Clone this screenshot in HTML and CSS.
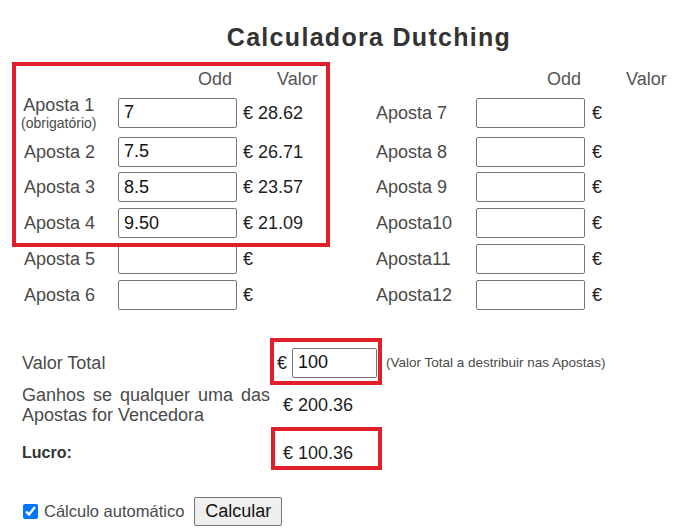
FILE: index.html
```html
<html>
	<head>
		<meta charset="utf-8">
		<title>Calculadora Dutching</title>
		<link rel="stylesheet" href="styles.css">
	</head>
	<body>

		<div id='page'>

			<h1 class='title'>Calculadora Dutching</h1>

			<!-- apostas 1 a 12, duas colunas -->
			<div class='bets'>
				<div></div>
				<div class='head odd'>Odd</div>
				<div class='head valor'>Valor</div>
				<div></div>
				<div class='head odd'>Odd</div>
				<div class='head valor'>Valor</div>

				<div class='label'><span class='first'>Aposta 1<span class='note'>(obrigatório)</span></span></div>
				<div><input class='odd-l' type='text' value='7'></div>
				<div class='value'>€ 28.62</div>
				<div class='label'>Aposta 7</div>
				<div><input class='odd-r' type='text'></div>
				<div class='value'>€</div>

				<div class='label left'>Aposta 2</div>
				<div><input class='odd-l' type='text' value='7.5'></div>
				<div class='value'>€ 26.71</div>
				<div class='label'>Aposta 8</div>
				<div><input class='odd-r' type='text'></div>
				<div class='value'>€</div>

				<div class='label left'>Aposta 3</div>
				<div><input class='odd-l' type='text' value='8.5'></div>
				<div class='value'>€ 23.57</div>
				<div class='label'>Aposta 9</div>
				<div><input class='odd-r' type='text'></div>
				<div class='value'>€</div>

				<div class='label left'>Aposta 4</div>
				<div><input class='odd-l' type='text' value='9.50'></div>
				<div class='value'>€ 21.09</div>
				<div class='label'>Aposta10</div>
				<div><input class='odd-r' type='text'></div>
				<div class='value'>€</div>

				<div class='label left'>Aposta 5</div>
				<div><input class='odd-l' type='text'></div>
				<div class='value'>€</div>
				<div class='label'>Aposta11</div>
				<div><input class='odd-r' type='text'></div>
				<div class='value'>€</div>

				<div class='label left'>Aposta 6</div>
				<div><input class='odd-l' type='text'></div>
				<div class='value'>€</div>
				<div class='label'>Aposta12</div>
				<div><input class='odd-r' type='text'></div>
				<div class='value'>€</div>
			</div>

			<div class='totals'>
				<div class='row row-total'>
					<div class='t-label'>Valor Total</div>
					<div class='t-value'>€<input class='total' type='text' value='100'><span class='hint'>(Valor Total a destribuir nas Apostas)</span></div>
				</div>
				<div class='row row-ganhos'>
					<div class='t-label justify'>Ganhos se qualquer uma das Apostas for Vencedora</div>
					<div class='t-value amount'>€ 200.36</div>
				</div>
				<div class='row row-lucro'>
					<div class='t-label bold'>Lucro:</div>
					<div class='t-value amount'>€ 100.36</div>
				</div>
			</div>

			<div class='actions'>
				<input type='checkbox' id='auto' checked>
				<label for='auto'>Cálculo automático</label>
				<button type='button'>Calcular</button>
			</div>

			<!-- marcas de destaque -->
			<div class='mark mark-bets'></div>
			<div class='mark mark-total'></div>
			<div class='mark mark-lucro'></div>

		</div>

	</body>
</html>
```

FILE: styles.css
```css
body {
	margin: 0;
	font-family: "Liberation Sans", Arial, sans-serif;
	background: #fff;
}

div#page {
	position: relative;
	width: 684px;
	height: 529px;
	overflow: hidden;
}

h1.title {
	margin: 22px 0 0 0;
	padding-left: 54px;
	text-align: center;
	font-size: 25px;
	line-height: 30px;
	letter-spacing: 1.3px;
	color: #333;
}

div.bets {
	display: grid;
	grid-template-columns: 97px 125px 133px 100px 116px 1fr;
	row-gap: 5.75px;
	align-items: center;
	margin-top: 17px;
	padding-left: 21px;
	font-size: 18px;
	line-height: 20px;
}

div.head {
	color: #555;
}

div.head.odd {
	text-align: right;
	padding-right: 11px;
}

div.head.valor {
	padding-left: 34px;
}

div.label {
	color: #4a4a4a;
}

div.label.left {
	padding-left: 3px;
}

span.first {
	display: inline-block;
	text-align: center;
}

span.note {
	display: block;
	font-size: 14px;
	line-height: 16px;
}

div.value {
	color: #222;
}

input[type=text] {
	box-sizing: border-box;
	height: 30px;
	margin: 0;
	padding: 1px 5px;
	border: 1px solid #767676;
	border-radius: 2px;
	font-family: "Liberation Sans", Arial, sans-serif;
	font-size: 18px;
	color: #111;
	display: block;
}

input.odd-l {
	width: 119px;
}

input.odd-r {
	width: 109px;
}

div.totals {
	margin-top: 38px;
	padding-left: 22px;
	font-size: 18px;
	line-height: 20px;
}

div.row {
	display: flex;
	align-items: center;
}

div.row-total {
	height: 30px;
}

div.row-ganhos {
	margin-top: 7px;
}

div.row-lucro {
	margin-top: 13px;
	height: 30px;
}

div.t-label {
	width: 248px;
	margin-right: 7px;
	color: #4a4a4a;
}

div.t-label.justify {
	text-align: justify;
}

div.t-label.bold {
	font-weight: bold;
	font-size: 16px;
	color: #333;
}

div.t-value {
	display: flex;
	align-items: center;
	color: #222;
}

div.t-value.amount {
	padding-left: 6px;
}

input.total {
	width: 85px;
	margin-left: 5px;
}

span.hint {
	margin-left: 9px;
	font-size: 13.5px;
	color: #4a4a4a;
}

div.actions {
	display: flex;
	align-items: center;
	margin-top: 29px;
	padding-left: 23px;
	height: 29px;
}

div.actions input {
	width: 15px;
	height: 15px;
	margin: 0 6px 0 0;
	accent-color: #0075ff;
}

div.actions label {
	font-size: 16.5px;
	color: #4a4a4a;
}

div.actions button {
	margin-left: 10px;
	height: 29px;
	padding: 0 10px;
	font-family: "Liberation Sans", Arial, sans-serif;
	font-size: 18px;
	color: #111;
	background: #efefef;
	border: 1px solid #767676;
	border-radius: 2px;
}

/* caixas vermelhas por cima do formulario */
div.mark {
	position: absolute;
	box-sizing: border-box;
	border: 4px solid #e01f2b;
}

div.mark-bets {
	left: 12px;
	top: 62px;
	width: 318px;
	height: 185px;
}

div.mark-total {
	left: 270px;
	top: 338px;
	width: 112px;
	height: 47px;
}

div.mark-lucro {
	left: 271px;
	top: 427px;
	width: 111px;
	height: 43px;
}
```
